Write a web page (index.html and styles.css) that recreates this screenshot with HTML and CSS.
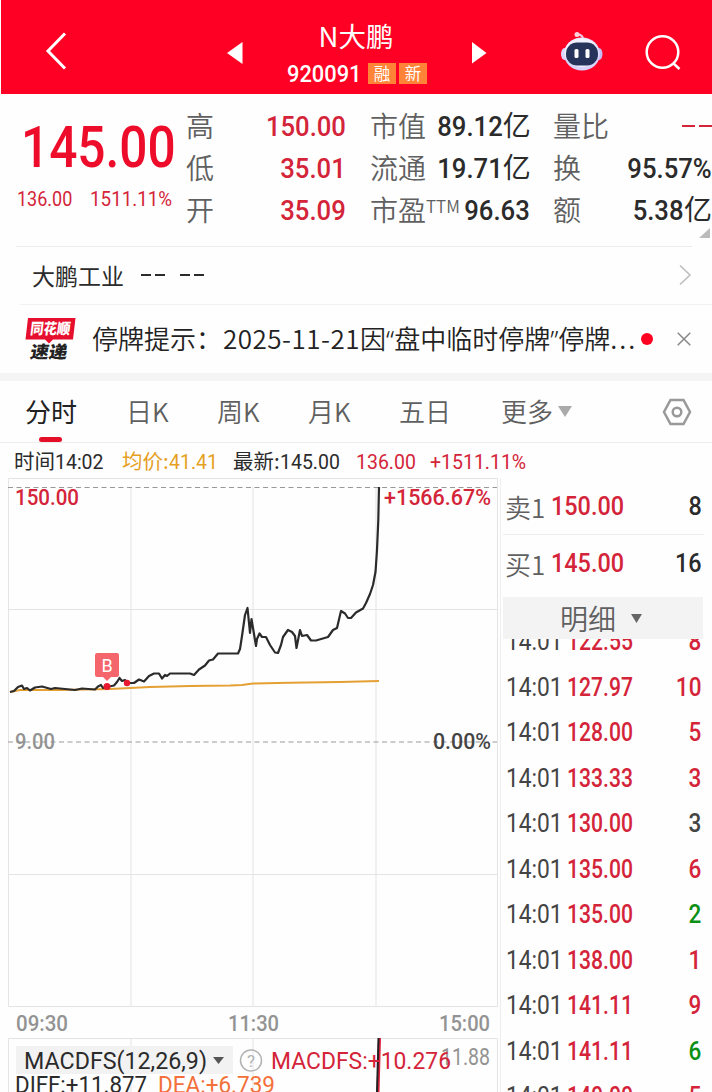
FILE: index.html
```html
<!DOCTYPE html>
<html lang="zh-CN">
<head>
<meta charset="utf-8">
<title>N大鹏 920091</title>
<link rel="stylesheet" href="styles.css">
</head>
<body>
<header class="top">
  <svg class="back" width="24" height="42" viewBox="0 0 24 42"><path d="M21 3.500 4 21 21 38.500" /></svg>
  <svg class="prev" width="16" height="24" viewBox="0 0 16 24"><path d="M0 12 15.500 1V23z"/></svg>
  <div class="stock">
    <div class="name">N大鹏</div>
    <div class="code"><span class="n">920091</span><i>融</i><i>新</i></div>
  </div>
  <svg class="next" width="16" height="24" viewBox="0 0 16 24"><path d="M0 1 14.500 12 0 22.500z"/></svg>
  <svg class="robot" width="44" height="42" viewBox="0 0 44 42">
    <path d="M23 8Q23 4 17 3" fill="none" stroke="#f3c9e3" stroke-width="2"/>
    <circle cx="17" cy="3.500" r="2.500" fill="#ffd2dc"/>
    <ellipse cx="4.500" cy="23" rx="3.500" ry="6" fill="#dcd6ff"/>
    <ellipse cx="39" cy="23" rx="3.500" ry="6" fill="#c6bcf5"/>
    <ellipse cx="22" cy="23" rx="18" ry="16.500" fill="#d9d4fb"/>
    <ellipse cx="21.500" cy="21.500" rx="17" ry="14.500" fill="#f1f0ff"/>
    <rect x="6" y="11.500" width="32" height="23" rx="11" fill="#26345c"/>
    <rect x="14.500" y="18" width="4" height="9" rx="1.500" fill="#fff"/>
    <rect x="25.500" y="18" width="4" height="9" rx="1.500" fill="#fff"/>
  </svg>
  <svg class="search" width="38" height="38" viewBox="0 0 38 38"><circle cx="17.500" cy="18" r="15.800"/><path d="M28.500 29.500 34.500 35"/></svg>
</header>

<section class="quote">
  <div class="last">
    <div class="price"><span class="n">145.00</span></div>
    <div class="change"><span class="n">136.00</span><span class="n">1511.11%</span></div>
  </div>
  <dl class="c1">
    <dt>高</dt><dd class="red"><span class="n">150.00</span></dd>
    <dt>低</dt><dd class="red"><span class="n">35.01</span></dd>
    <dt>开</dt><dd class="red"><span class="n">35.09</span></dd>
  </dl>
  <dl class="c2">
    <dt>市值</dt><dd><span class="n">89.12</span>亿</dd>
    <dt>流通</dt><dd><span class="n">19.71</span>亿</dd>
    <dt>市盈<sup>TTM</sup></dt><dd><span class="n">96.63</span></dd>
  </dl>
  <dl class="c3">
    <dt>量比</dt><dd class="red"><b class="dash"></b><b class="dash"></b></dd>
    <dt>换</dt><dd><span class="n">95.57%</span></dd>
    <dt>额</dt><dd><span class="n">5.38</span>亿</dd>
  </dl>
  <svg class="corner" width="11" height="10" viewBox="0 0 11 10"><path d="M11 0V10H0z"/></svg>
</section>

<section class="company">
  <span>大鹏工业</span><span class="pair"><b class="dash"></b><b class="dash"></b></span><span class="pair"><b class="dash"></b><b class="dash"></b></span>
  <svg width="14" height="22" viewBox="0 0 14 22"><path d="M2 1.500 12 11 2 20.500"/></svg>
</section>

<section class="news">
  <svg class="logo" width="54" height="46" viewBox="0 0 54 46">
    <path d="M4 2H51.500L49 23.500H29L25 27.500 21 23.500H1.500z" fill="#e60f2d"/>
    <text x="6" y="18.500" textLength="40" lengthAdjust="spacingAndGlyphs" fill="#fff" font-size="15" transform="skewX(-7) translate(2 0)">同花顺</text>
    <text x="7" y="42" textLength="37" lengthAdjust="spacingAndGlyphs" fill="#222" font-size="17" transform="skewX(-10) translate(6 0)">速递</text>
  </svg>
  <p>停牌提示：<span class="date">2025-11-21</span>因<q>“</q>盘中临时停牌<q>”</q>停牌<span class="dots">...</span></p>
  <i></i>
  <svg class="close" width="14" height="14" viewBox="0 0 14 14"><path d="M.7.7 13.300 13.300M13.300.7.7 13.300"/></svg>
</section>

<nav class="tabs">
  <a class="on">分时</a><a>日K</a><a>周K</a><a>月K</a><a>五日</a><a>更多</a>
  <svg class="caret" width="14" height="11" viewBox="0 0 14 11"><path d="M0 0H14L7 11z"/></svg>
  <svg class="gear" width="30" height="28" viewBox="0 0 30 28"><path d="M8.500 2H21.500L28 14 21.500 26H8.500L2 14z"/><circle cx="15" cy="14" r="4.300"/></svg>
</nav>

<div class="info">
  <span class="t">时间<span class="n">14:02</span></span>
  <span class="a">均价:<span class="n">41.41</span></span>
  <span class="l">最新:<span class="n">145.00</span></span>
  <span class="d red"><span class="n">136.00</span></span>
  <span class="p red"><span class="n">+1511.11%</span></span>
</div>

<main>
  <svg class="chart" width="500" height="614" viewBox="0 478 500 614">
    <path class="grid" d="M8.500 478.500H497.500V1006.500H8.500zM131 487V1006M253 487V1006M376 487V1006M8 609.500H497M8 874.500H497M8.500 1092V1038.500H497.500V1092M131 1038V1092M253 1038V1092"/>
    <path class="dashed" d="M8 487.500H497M8 742H497"/>
    <path class="avg" d="M10 692 20 690 60 690 110 689 150 687 190 686 230 685.500 242 685 253 683.500 290 682.800 340 682 379 681"/>
    <path class="line" d="M10 692 14 691 18 687 22 685.500 24 689 27 688 30 690.500 35 687.500 42 686.500 51 689 55 688 65 689 75 690 82 688.500 95 689.500 98 686.500 101 685 103 688 107 687 114 685.500 117 682 119.500 678 122 681 125 680 127.500 683 134 683 139 679.500 144 681.500 149 676 154 673.500 159 673.500 162 678.500 165 675 167 676 170 673.500 190 673.500 194 675 199 669.500 205 665.500 209 660.500 213 659.500 218 653.500 238 653.500 240 649 242 636 245 615 247.500 608 250 633 251.500 619 253 628 256 646 257 639 259.500 633.500 262 637 266 637 270 645 275 652.500 278 653 281 645 283 637 288 630 292 632 295 636 296.500 648 300 630 302 636 307 635 311 640.500 316 640.500 328 637 333 630 337 628 341 611 345 613.500 348 618 351 618 356 612.500 363 608.500 366 603 370 594 373 585 375.500 572 377 550 378.300 520 379 487"/>
    <circle class="dot" cx="107" cy="686.500" r="3.500"/><circle class="dot" cx="127" cy="683" r="3.200"/>
    <path class="flag" d="M97 653H117Q119 653 119 655V675Q119 677 117 677H111L107 681 103 677H97Q95 677 95 675V655Q95 653 97 653z"/>
    <text class="b" x="107" y="671.500" text-anchor="middle">B</text>
    <g class="num">
      <text class="red" x="15" y="505" textLength="64" lengthAdjust="spacingAndGlyphs">150.00</text>
      <text class="red" x="384" y="505" textLength="107" lengthAdjust="spacingAndGlyphs">+1566.67%</text>
      <text class="gray" x="15" y="748.500" textLength="40" lengthAdjust="spacingAndGlyphs">9.00</text>
      <text class="dark" x="433" y="748.500" textLength="58" lengthAdjust="spacingAndGlyphs">0.00%</text>
      <text class="gray" x="16" y="1031" textLength="52" lengthAdjust="spacingAndGlyphs">09:30</text>
      <text class="gray" x="228" y="1031" textLength="51" lengthAdjust="spacingAndGlyphs">11:30</text>
      <text class="gray" x="439" y="1031" textLength="51" lengthAdjust="spacingAndGlyphs">15:00</text>
    </g>
    <rect x="16" y="1046" width="217" height="28" fill="#f2f2f2"/>
    <path d="M379.500 1038 378 1092" stroke="#e0203f" stroke-width="3" fill="none"/>
    <path d="M378.500 1038 377 1092" stroke="#222" stroke-width="2" fill="none"/>
    <g class="macd">
      <text class="black" x="24" y="1069" textLength="183" lengthAdjust="spacingAndGlyphs">MACDFS(12,26,9)</text>
      <path d="M213 1057H224L218.500 1064z" fill="#555"/>
      <circle cx="251" cy="1060.500" r="10.500" fill="none" stroke="#b3b3b3" stroke-width="1.500"/>
      <text class="q" x="251" y="1067" text-anchor="middle">?</text>
      <text class="gray" x="441" y="1064.500" textLength="49" lengthAdjust="spacingAndGlyphs">11.88</text>
      <text class="red" x="271" y="1069" textLength="180" lengthAdjust="spacingAndGlyphs">MACDFS:+10.276</text>
      <text class="black" x="15" y="1093" textLength="132" lengthAdjust="spacingAndGlyphs">DIFF:+11.877</text>
      <text class="orange" x="158" y="1093" textLength="117" lengthAdjust="spacingAndGlyphs">DEA:+6.739</text>
    </g>
  </svg>

  <aside>
    <div class="order"><span>卖1</span><span class="n red">150.00</span><span class="n v">8</span></div>
    <div class="order"><span>买1</span><span class="n red">145.00</span><span class="n v">16</span></div>
    <div class="detail">明细<svg width="11" height="9" viewBox="0 0 11 9"><path d="M0 0H11L5.500 9z"/></svg></div>
    <div class="ticks">
      <div><span class="n">14:01</span><span class="n red">122.55</span><span class="n v red">8</span></div>
      <div><span class="n">14:01</span><span class="n red">127.97</span><span class="n v red">10</span></div>
      <div><span class="n">14:01</span><span class="n red">128.00</span><span class="n v red">5</span></div>
      <div><span class="n">14:01</span><span class="n red">133.33</span><span class="n v red">3</span></div>
      <div><span class="n">14:01</span><span class="n red">130.00</span><span class="n v">3</span></div>
      <div><span class="n">14:01</span><span class="n red">135.00</span><span class="n v red">6</span></div>
      <div><span class="n">14:01</span><span class="n red">135.00</span><span class="n v green">2</span></div>
      <div><span class="n">14:01</span><span class="n red">138.00</span><span class="n v red">1</span></div>
      <div><span class="n">14:01</span><span class="n red">141.11</span><span class="n v red">9</span></div>
      <div><span class="n">14:01</span><span class="n red">141.11</span><span class="n v green">6</span></div>
      <div><span class="n">14:01</span><span class="n red">140.00</span><span class="n v red">5</span></div>
    </div>
  </aside>
</main>
</body>
</html>
```
FILE: styles.css
```css
* { box-sizing: border-box; margin: 0; padding: 0; }
body {
  width: 712px; height: 1092px; overflow: hidden; background: #fefefe; color: #2b2b2b;
  font-family: "Noto Sans CJK SC", sans-serif; font-weight: 400;
  font-kerning: none; white-space: nowrap;
}
i { font-style: normal; }
svg { display: block; flex: none; }
.n { display: inline-block; font-family: Roboto, sans-serif; font-weight: 500; transform: scaleX(.9); transform-origin: right; }
.red { color: #d42439; fill: #d42439; }
.green { color: #0b9015; }
.dash { display: inline-block; width: 12px; height: 2px; background: currentColor; }

.top { height: 94px; margin-left: 1px; background: #ff0025; color: #fff; display: flex; align-items: flex-start; }
.top svg { fill: #fff; }
.top .back { margin: 30px 0 0 43px; fill: none; stroke: #fff; stroke-width: 3; }
.prev { margin: 41px 0 0 159px; }
.stock { width: 144px; margin: 17px 0 0 43px; }
.name { font-size: 27.500px; line-height: 36px; text-align: center; padding-right: 4px; }
.code { display: flex; height: 41px; align-items: center; padding-left: 1px; }
.code .n { font-size: 23.500px; width: 82px; transform: scaleX(.93); transform-origin: left; }
.code i { flex: none; width: 28px; height: 21px; margin-right: 3px; background: #ff8437; font-size: 16.500px; line-height: 20px; text-align: center; }
.next { margin: 41px 0 0 42px; }
.robot { margin: 31px 0 0 72px; }
.top .search { margin: 34px 0 0 41px; fill: none; stroke: #fff; stroke-width: 2.500; }

.quote { height: 152px; display: flex; padding-top: 10px; position: relative; }
.last { width: 186px; padding-top: 12px; }
.price { height: 63px; padding-left: 21px; line-height: 63px; color: #ee0c2b; }
.price .n { font-size: 58px; transform: scaleX(.855); transform-origin: left; }
.change { display: flex; padding: 8px 0 0 17px; line-height: 24px; color: #d42439; }
.change .n { font-size: 20px; font-weight: 400; width: 73px; transform-origin: left; }
.change .n + .n { transform: scaleX(.94); }
dl { display: grid; grid-template-columns: auto 1fr; grid-auto-rows: 42px; line-height: 42px; align-content: start; font-size: 28px; }
dt { color: #606060; font-weight: 350; }
dd { text-align: right; margin-top: -1px; }
dd .n { font-size: 28.500px; }
.c1 { width: 161px; }
.c2 { width: 160px; margin-left: 24px; grid-template-columns: 60px 100px; }
.c3 { width: 160px; margin-left: 23px; }
sup { font-size: 17px; line-height: 0; vertical-align: 8px; }
.c3 .dash { width: 13px; margin-left: 4px; vertical-align: 9px; }
.corner { position: absolute; right: 2px; bottom: 8px; fill: #bbb; }

.company { height: 58px; margin: 0 20px 0 16px; padding: 0 0 1px 16px; border-top: 1px solid #ececec; display: flex; align-items: center; font-size: 23px; }
.company > span:first-child { margin-top: -1px; }
.pair { display: flex; gap: 4px; margin-left: 17px; }
.pair + .pair { margin-left: 15px; }
.pair .dash { width: 10px; }
.company svg { margin-left: auto; fill: none; stroke: #bdbdbd; stroke-width: 1.600; }

.news { height: 69px; margin-left: 20px; border-top: 1px solid #f2f2f2; display: flex; align-items: center; font-size: 26px; }
.logo { margin-left: 4px; font-weight: 900; }
.news p { width: 569px; height: 40px; line-height: 38px; padding-left: 14px; font-weight: 350; color: #222; }
.date { letter-spacing: .5px; margin-left: 1px; }
q { quotes: none; font-family: "Noto Sans", sans-serif; }
q::before, q::after { content: none; }
.dots { letter-spacing: 2px; }
.news i { width: 12px; height: 12px; border-radius: 50%; background: #ff0020; margin-left: -6px; }
.close { margin-left: 24px; fill: none; stroke: #888; stroke-width: 1.500; }

.tabs { height: 70px; border-top: 8px solid #f4f4f4; border-bottom: 1px solid #ededed; display: flex; align-items: center; font-size: 26px; padding-left: 25px; }
.tabs a { color: #606060; width: 91px; height: 61px; line-height: 59px; font-weight: 350; }
.tabs .on { width: 101px; color: #222; font-weight: 400; position: relative; }
.on::after { content: ""; position: absolute; left: 14px; bottom: 0; width: 23px; height: 5px; border-radius: 3px; background: #e50f27; }
.tabs a:nth-of-type(5) { width: 102px; }
.tabs a:nth-of-type(6) { width: 57px; }
.caret { fill: #aaa; }
.gear { margin-left: 90px; fill: none; stroke: #999; stroke-width: 2.500; }

.info { height: 35px; display: flex; font-size: 20.500px; line-height: 35px; padding-left: 14px; }
.info .n { font-weight: 400; transform: scaleX(.95); transform-origin: left; font-size: 20.500px; }
.info .t { width: 108px; }
.info .a { width: 111px; color: #e5a023; }
.info .l { width: 123px; }
.info .d { width: 74px; }

main { display: flex; height: 614px; }
.grid { fill: none; stroke: #e4e4e4; }
.dashed { fill: none; stroke: #999; stroke-dasharray: 5 3.500; }
.avg { fill: none; stroke: #e5a034; stroke-width: 2; }
.line { fill: none; stroke: #2b2b2b; stroke-width: 2.200; stroke-linejoin: round; }
.dot { fill: #e8182f; }
.flag { fill: #f5666c; }
.b { fill: #fff; font: 18px Roboto, sans-serif; }
.num { font: 500 22.500px Roboto, sans-serif; }
.macd { font: 400 23.500px Roboto, sans-serif; }
.num .gray, .macd .gray { fill: #939393; }
.num .dark { fill: #444; }
.black { fill: #2b2b2b; }
.orange { fill: #f3703a; }
.macd .q { fill: #b3b3b3; font-size: 17px; }

aside { width: 212px; border-left: 1px solid #eee; font-size: 27px; }
.order { height: 56px; display: grid; grid-template-columns: 46px 1fr auto; align-items: center; padding-left: 4px; padding-right: 10px; }
.order > span:first-child { color: #606060; font-weight: 350; font-size: 26px; }
.order .n { font-size: 26px; transform-origin: left; }
.order .v { transform-origin: right; }
.order + .order { margin: 0 8px 0 2px; border-top: 1px solid #ececec; padding: 0 2px 0 2px; height: 57px; }
.detail { height: 42px; margin: 6px 9px 0 2px; background: #f3f3f3; color: #606060; font-size: 28px; line-height: 41px; padding-left: 57px; display: flex; align-items: center; font-weight: 350; }
.detail svg { margin-left: 15px; fill: #666; }
.ticks { height: 453px; overflow: hidden; }
.ticks div { height: 45.500px; display: grid; grid-template-columns: 61px 1fr auto; align-items: center; padding: 0 11px 0 5px; color: #444; }
.ticks div:first-child { margin-top: -20px; }
.ticks .n { font-size: 25px; transform: scaleX(.91); transform-origin: left; font-weight: 400; }
.ticks .red { color: #d42439; transform: scaleX(.845); font-weight: 500; }
.ticks .v { transform: scaleX(.9); transform-origin: right; font-weight: 500; }
```
